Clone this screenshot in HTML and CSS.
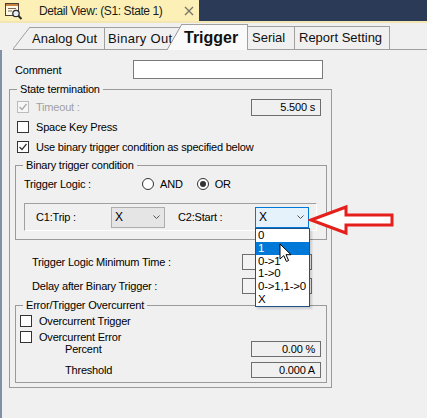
FILE: index.html
```html
<!DOCTYPE html>
<html>
<head>
<meta charset="utf-8">
<link rel="stylesheet" href="styles.css">
</head>
<body>
<div class="titlebar">
  <div class="doctab">
    <svg class="docicon" width="20" height="18" viewBox="0 0 20 18">
      <rect x="1.5" y="1.5" width="13" height="12" fill="#fff8e4" stroke="#4a3f36"/>
      <rect x="2" y="2" width="12" height="2" fill="#c98540"/>
      <line x1="4" y1="6.5" x2="12" y2="6.5" stroke="#7a6a5a"/>
      <line x1="4" y1="9" x2="8" y2="9" stroke="#7a6a5a"/>
      <circle cx="12" cy="11.5" r="3.2" fill="#e6eefa" stroke="#2d2d2d" stroke-width="1.3"/>
      <line x1="14.3" y1="13.8" x2="17.5" y2="17" stroke="#2d2d2d" stroke-width="2"/>
    </svg>
    <span class="doctitle">Detail View: (S1: State 1)</span>
    <svg class="close" width="10" height="10" viewBox="0 0 10 10"><path d="M1 1L9 9M9 1L1 9" stroke="#77776a" stroke-width="1.4"/></svg>
  </div>
</div>
<div class="titleline"></div>
<div class="tabs">
  <div class="tab t-analog">Analog Out</div>
  <div class="tab t-binary">Binary Out</div>
  <div class="tab t-trigger">Trigger</div>
  <div class="tab t-serial">Serial</div>
  <div class="tab t-report">Report Setting</div>
</div>
<div class="page">
  <div class="comment-row">
    <span class="comment-lbl">Comment</span>
    <div class="comment-box"></div>
  </div>
  <fieldset class="grp grp-state">
    <legend>State termination</legend>
    <div class="crow r-first">
      <span class="cb disabled"><svg width="10" height="10" viewBox="0 0 10 10"><polyline points="1.5,5 4,7.5 8.5,2" fill="none" stroke="#a9a9a9" stroke-width="1.2"/></svg></span>
      <span class="cb-lbl dis">Timeout :</span>
      <div class="valbox">5.500 s</div>
    </div>
    <div class="crow">
      <span class="cb"></span>
      <span class="cb-lbl">Space Key Press</span>
    </div>
    <div class="crow">
      <span class="cb"><svg width="10" height="10" viewBox="0 0 10 10"><polyline points="1.5,5 4,7.5 8.5,2" fill="none" stroke="#333" stroke-width="1.2"/></svg></span>
      <span class="cb-lbl">Use binary trigger condition as specified below</span>
    </div>
    <fieldset class="grp grp-binary">
      <legend>Binary trigger condition</legend>
      <div class="logic-row">
        <span class="logic-lbl">Trigger Logic :</span>
        <span class="radio"></span><span class="radio-lbl">AND</span>
        <span class="radio on r-or"></span><span class="radio-lbl">OR</span>
      </div>
      <div class="sunken">
        <span class="c-lbl c1">C1:Trip :</span>
        <div class="combo"><span class="combo-val">X</span><svg class="chev" width="7" height="4" viewBox="0 0 7 4"><polyline points="0.5,0.5 3.5,3.5 6.5,0.5" fill="none" stroke="#555" stroke-width="1"/></svg></div>
        <span class="c-lbl c2">C2:Start :</span>
        <div class="combo focus"><span class="combo-val">X</span><svg class="chev" width="7" height="4" viewBox="0 0 7 4"><polyline points="0.5,0.5 3.5,3.5 6.5,0.5" fill="none" stroke="#555" stroke-width="1"/></svg></div>
      </div>
    </fieldset>
    <div class="time-row r-min"><span class="time-lbl">Trigger Logic Minimum Time :</span><div class="timebox"></div></div>
    <div class="time-row r-delay"><span class="time-lbl">Delay after Binary Trigger :</span><div class="timebox"></div></div>
    <fieldset class="grp grp-err">
      <legend>Error/Trigger Overcurrent</legend>
      <div class="erow r-ot"><span class="cb"></span><span class="cb-lbl">Overcurrent Trigger</span></div>
      <div class="erow r-oe"><span class="cb"></span><span class="cb-lbl">Overcurrent Error</span></div>
      <div class="erow r-pct"><span class="sub-lbl">Percent</span><div class="valbox small">0.00 %</div></div>
      <div class="erow r-thr"><span class="sub-lbl">Threshold</span><div class="valbox small">0.000 A</div></div>
    </fieldset>
  </fieldset>
</div>

<div class="dropdown">
  <div class="dd-item">0</div>
  <div class="dd-item sel">1</div>
  <div class="dd-item">0-&gt;1</div>
  <div class="dd-item">1-&gt;0</div>
  <div class="dd-item">0-&gt;1,1-&gt;0</div>
  <div class="dd-item">X</div>
</div>

<svg class="red-arrow" width="90" height="34" viewBox="0 0 90 34">
  <polygon points="3,17 38,4 38,12 84,12 84,22 38,22 38,30" fill="#ffffff" stroke="#e5201c" stroke-width="3" stroke-linejoin="miter"/>
</svg>

<svg class="cursor" width="15" height="21" viewBox="0 0 15 21">
  <path d="M1 1 L1 16 L4.8 12.6 L7.4 18.5 L9.6 17.5 L7 11.7 L12 11.7 Z" fill="#ffffff" stroke="#000" stroke-width="1" stroke-linejoin="round"/>
</svg>
</body>
</html>
```

FILE: styles.css
```css
* { box-sizing: border-box; }
html, body { margin: 0; padding: 0; }
body {
  width: 427px;
  height: 418px;
  overflow: hidden;
  position: relative;
  background: #f0f0f0;
  font-family: "Liberation Sans", Arial, sans-serif;
  font-size: 11px;
  letter-spacing: -0.2px;
  color: #000;
}

/* ---------- title bar ---------- */
.titlebar {
  height: 21px;
  background: #2b3a57;
  display: flex;
}
.doctab {
  width: 199px;
  height: 21px;
  background: #fdf0b6;
  display: flex;
  align-items: center;
  padding-left: 4px;
}
.docicon { margin-right: 15px; flex: none; }
.doctitle { font-size: 12px; letter-spacing: -0.4px; color: #1b1b1b; }
.close { margin-left: auto; margin-right: 5px; }
.titleline { height: 2px; background: #f3e6b3; }

/* ---------- tabs ---------- */
.tabs {
  height: 27px;
  display: flex;
  align-items: flex-end;
  padding-left: 30px;
  background: linear-gradient(#a0a0a0, #a0a0a0) 13px 100% / 100% 1px no-repeat;
}
.tab {
  position: relative;
  height: 22px;
  margin-bottom: 1px;
  border-top: 1px solid #a0a0a0;
  border-right: 1px solid #a0a0a0;
  font-size: 13px;
  letter-spacing: 0;
  line-height: 21px;
  color: #111;
  background: #f0f0f0;
  white-space: nowrap;
  overflow: hidden;
}
.t-analog { width: 75px; padding-left: 2px; overflow: visible; }
.t-analog::before {
  content: "";
  position: absolute;
  left: -17px;
  top: -1px;
  width: 17px;
  height: 22px;
  background: linear-gradient(to bottom right, transparent calc(50% - 0.8px), #a0a0a0 50%, #f0f0f0 calc(50% + 0.8px));
}
.t-binary { width: 75px; padding-left: 3px; border-right: none; letter-spacing: 0.3px; }
.t-trigger {
  z-index: 2;
  margin-left: -13px;
  width: 81px;
  height: 26px;
  margin-bottom: 0;
  border-top: none;
  padding-left: 17px;
  font-size: 16px;
  font-weight: bold;
  line-height: 28px;
  background:
    linear-gradient(#a0a0a0, #a0a0a0) 15px 0 / 100% 1px no-repeat,
    linear-gradient(to bottom right, transparent calc(50% - 0.8px), #909090 50%, #fafafa calc(50% + 0.8px)) 0 0 / 15px 100% no-repeat,
    linear-gradient(#fafafa, #fafafa) 15px 0 / 100% 100% no-repeat;
}
.t-serial { width: 47px; height: 23px; padding-left: 4px; line-height: 22px; }
.t-report { width: 95px; height: 23px; padding-left: 4px; line-height: 22px; }

/* ---------- page ---------- */
.page {
  height: 368px;
  border-left: 2px solid #8290a6;
  padding-top: 10px;
}
.comment-row {
  display: flex;
  align-items: center;
  height: 19px;
  padding-left: 13px;
}
.comment-lbl { width: 118px; }
.comment-box {
  width: 190px;
  height: 19px;
  background: #fff;
  border: 1px solid #7a7a7a;
}

/* group boxes */
.grp {
  margin: 0;
  padding: 0;
  min-width: 0;
  border: 1px solid #9a9a9a;
}
.grp legend {
  padding: 0 3px;
  margin-left: 7px;
  line-height: 13px;
  font-size: 11px;
}
.grp-state {
  margin: 4px 0 0 7px;
  width: 323px;
  padding-bottom: 4px;
}
.grp-binary {
  margin: 2px 0 0 5px;
  width: 312px;
}
.grp-err {
  margin: 4px 0 0 5px;
  width: 312px;
  padding-bottom: 3px;
}

/* check rows */
.crow {
  display: flex;
  align-items: center;
  height: 20px;
  padding-left: 7px;
}
.r-first { margin-top: 1px; }
.cb {
  flex: none;
  width: 12px;
  height: 12px;
  border: 1px solid #333;
  background: #fff;
  display: flex;
  align-items: center;
  justify-content: center;
}
.cb.disabled { border-color: #bcbcbc; background: #f7f7f7; }
.cb-lbl { margin-left: 7px; white-space: nowrap; }
.dis { color: #a0a0a0; }
.valbox {
  margin-left: auto;
  margin-right: 10px;
  width: 70px;
  height: 17px;
  border: 1px solid #6e6e6e;
  text-align: right;
  padding-right: 5px;
  line-height: 15px;
  white-space: nowrap;
}
.valbox.small { height: 16px; line-height: 14px; margin-right: 5px; }

/* binary group */
.logic-row {
  display: flex;
  align-items: center;
  height: 20px;
  margin-top: 2px;
  padding-left: 8px;
}
.logic-lbl { width: 118px; }
.radio {
  flex: none;
  width: 12px;
  height: 12px;
  border-radius: 50%;
  border: 1px solid #333;
  background: #fff;
  display: flex;
  align-items: center;
  justify-content: center;
}
.radio.on::after {
  content: "";
  width: 6px;
  height: 6px;
  border-radius: 50%;
  background: #333;
}
.r-or { margin-left: 14px; }
.radio-lbl { margin-left: 6px; }

.sunken {
  display: flex;
  align-items: center;
  margin: 9px 0 8px 8px;
  width: 293px;
  height: 28px;
  border: 1px solid;
  border-color: #a0a0a0 #ffffff #ffffff #a0a0a0;
  padding-left: 11px;
}
.c1 { width: 75px; }
.c2 { width: 77px; margin-left: 13px; }
.combo {
  flex: none;
  display: flex;
  align-items: center;
  width: 54px;
  height: 21px;
  border: 1px solid #adadad;
  background: #e5e5e5;
  padding-left: 3px;
}
.combo.focus { border-color: #0078d7; background: #e5f1fb; }
.combo-val { font-size: 12px; }
.chev { margin-left: auto; margin-right: 4px; }

/* timing rows */
.time-row {
  display: flex;
  align-items: center;
  height: 18px;
  padding-left: 22px;
}
.r-min { margin-top: 13px; }
.r-delay { margin-top: 6px; }
.time-lbl { width: 210px; white-space: nowrap; }
.timebox {
  width: 70px;
  height: 16px;
  border: 1px solid #6e6e6e;
  background: #f3f3f3;
}

/* error group */
.erow {
  display: flex;
  align-items: center;
  padding-left: 4px;
}
.r-ot { height: 17px; margin-top: 0; }
.r-oe { height: 16px; }
.r-pct { height: 18px; margin-top: -5px; }
.r-thr { height: 18px; margin-top: 3px; }
.sub-lbl { margin-left: 45px; }

/* ---------- overlays ---------- */
.dropdown {
  position: absolute;
  left: 255px;
  top: 228px;
  width: 55px;
  border: 1px solid #1f5187;
  background: #fff;
  z-index: 5;
  box-shadow: 2px 2px 2px rgba(0,0,0,0.15);
}
.dd-item {
  height: 12.8px;
  line-height: 12.8px;
  padding-left: 2px;
  font-size: 11.5px;
  white-space: nowrap;
}
.dd-item.sel { background: #0078d7; color: #fff; }
.red-arrow {
  position: absolute;
  left: 308px;
  top: 203px;
  z-index: 6;
}
.cursor {
  position: absolute;
  left: 279px;
  top: 243px;
  z-index: 7;
}
```
